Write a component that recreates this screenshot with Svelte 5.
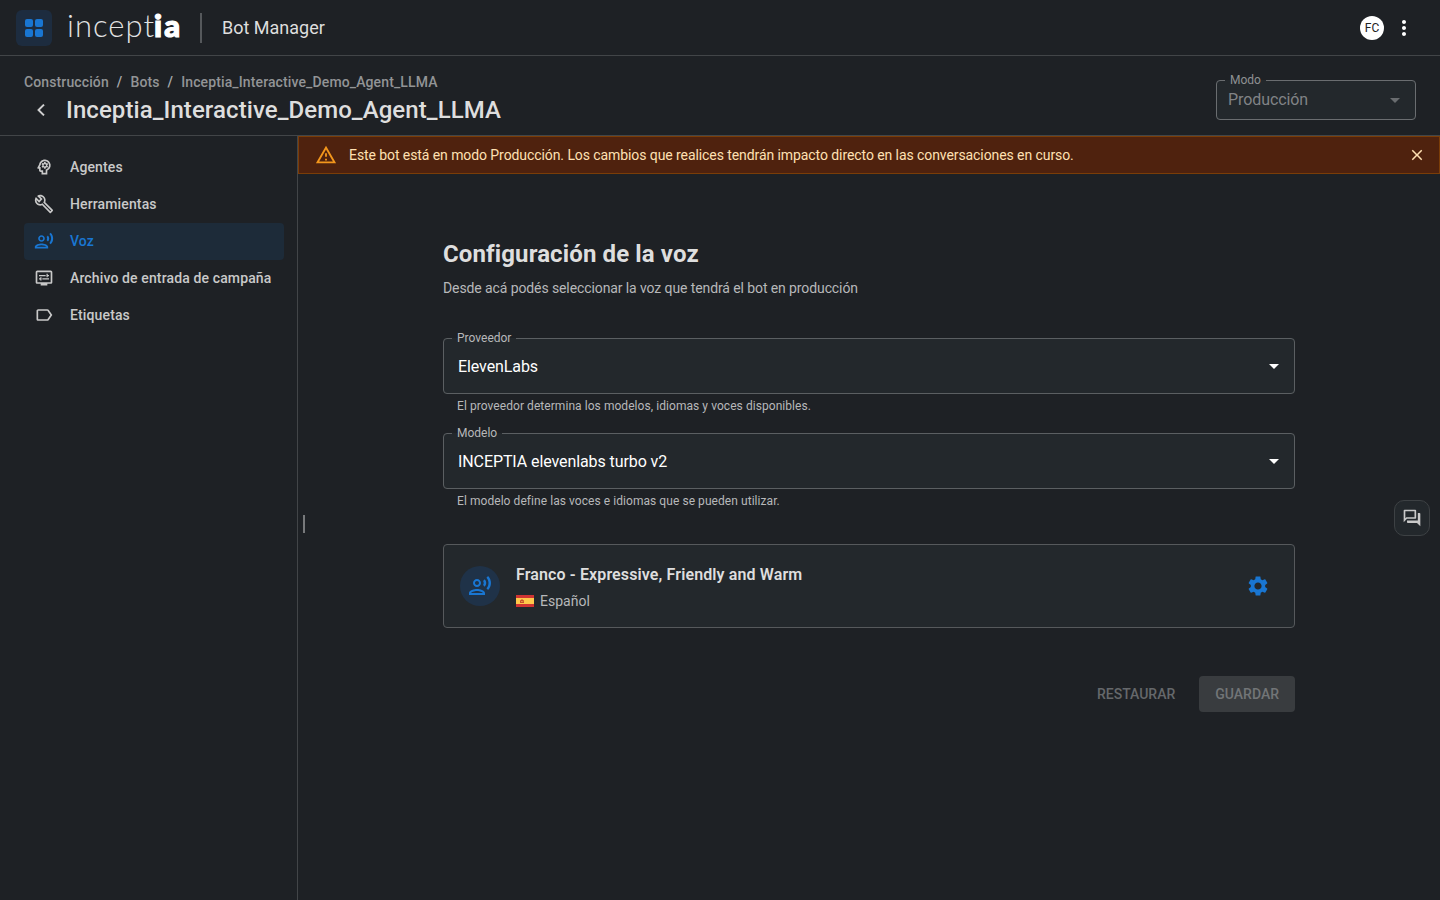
<script>
    let active = 'Voz';
    let showAlert = true;

    const voiceIcon =
        'M9 13c2.21 0 4-1.79 4-4s-1.79-4-4-4-4 1.79-4 4 1.79 4 4 4zm0-6c1.1 0 2 .9 2 2s-.9 2-2 2-2-.9-2-2 .9-2 2-2zm0 8c-2.67 0-8 1.34-8 4v2h16v-2c0-2.66-5.33-4-8-4zm-6 4c.22-.72 3.31-2 6-2 2.7 0 5.8 1.29 6 2H3zM15.08 7.05c.84 1.18.84 2.71 0 3.89l1.68 1.69c2.02-2.02 2.02-5.07 0-7.27l-1.68 1.69zM20.07 2l-1.63 1.63c2.77 3.02 2.77 7.56 0 10.74L20.07 16c3.9-3.89 3.91-9.95 0-14z';

    const crumbs = ['Construcción', 'Bots', 'Inceptia_Interactive_Demo_Agent_LLMA'];

    const menu = [
        {
            label: 'Agentes',
            icon: 'M15.82 7.22l-1 .4c-.21-.16-.43-.29-.67-.39L14 6.17c-.02-.1-.1-.17-.2-.17h-1.6c-.1 0-.18.07-.19.17l-.15 1.06c-.24.1-.47.23-.67.39l-1-.4c-.09-.03-.2 0-.24.09l-.8 1.38c-.05.09-.03.2.05.26l.85.66c-.03.12-.05.26-.05.39s.01.26.03.39l-.84.66c-.08.06-.1.17-.05.25l.8 1.39c.05.09.15.12.25.09l.99-.4c.21.16.43.29.68.39l.14 1.06c.02.1.1.17.2.17h1.6c.1 0 .18-.07.2-.17l.15-1.06c.24-.1.47-.23.67-.39l.99.4c.09.04.2 0 .24-.09l.8-1.39c.05-.09.03-.19-.05-.25l-.83-.66c.01-.13.02-.26.02-.39 0-.14-.01-.27-.04-.39l.85-.66c.08-.06.1-.17.05-.26l-.8-1.38c-.05-.09-.16-.12-.24-.09zM13 11.43c-.79 0-1.43-.64-1.43-1.43s.64-1.43 1.43-1.43 1.43.64 1.43 1.43-.64 1.43-1.43 1.43zM19.94 9.06c-.43-3.27-3.23-5.86-6.53-6.05C13.27 3 13.14 3 13 3 9.47 3 6.57 5.61 6.08 9l-1.93 3.48c-.41.66.07 1.52.85 1.52h1v2c0 1.1.9 2 2 2h1v3h7v-4.68c2.62-1.25 4.35-4.08 3.94-7.26zm-5.05 5.57l-.89.42V19h-3v-3H8v-4H6.7l1.33-2.33C8.21 7.06 10.35 5 13 5c2.76 0 5 2.24 5 5 0 2.09-1.29 3.88-3.11 4.63z'
        },
        {
            label: 'Herramientas',
            icon: 'M22.61 18.99l-9.08-9.08c.93-2.34.45-5.1-1.44-7C9.79.61 6.21.4 3.66 2.26L7.5 6.11 6.08 7.52 2.25 3.69C.39 6.23.6 9.82 2.9 12.11c1.86 1.86 4.57 2.35 6.89 1.48l9.11 9.11c.39.39 1.02.39 1.41 0l2.3-2.3c.4-.38.4-1.01 0-1.41zm-3 1.6l-9.46-9.46c-.61.45-1.29.72-2 .82-1.36.2-2.79-.21-3.83-1.25C3.37 9.76 2.93 8.5 3 7.26l3.09 3.09 4.24-4.24-3.09-3.09c1.24-.07 2.49.37 3.44 1.31 1.08 1.08 1.49 2.57 1.24 3.96-.12.71-.42 1.37-.88 1.96l9.45 9.45-.88.89z'
        },
        { label: 'Voz', icon: voiceIcon },
        {
            label: 'Archivo de entrada de campaña',
            icon: 'M20 3H4c-1.11 0-2 .89-2 2v12c0 1.1.89 2 2 2h4v2h8v-2h4c1.1 0 2-.9 2-2V5c0-1.11-.9-2-2-2zm0 14H4V5h16v12zM6 8.25h8v1.5H6zM16.5 9.75H18v-1.5h-1.5V7H15v4h1.5zM10 12.25h8v1.5h-8zM7.5 15H9v-4H7.5v1.25H6v1.5h1.5z'
        },
        {
            label: 'Etiquetas',
            icon: 'M17.63 5.84C17.27 5.33 16.67 5 16 5L5 5.01C3.9 5.01 3 5.9 3 7v10c0 1.1.9 1.99 2 1.99L16 19c.67 0 1.27-.33 1.63-.84L22 12l-4.37-6.16zM16 17H5V7h11l3.55 5L16 17z'
        }
    ];

    const fields = [
        {
            label: 'Proveedor',
            value: 'ElevenLabs',
            help: 'El proveedor determina los modelos, idiomas y voces disponibles.'
        },
        {
            label: 'Modelo',
            value: 'INCEPTIA elevenlabs turbo v2',
            help: 'El modelo define las voces e idiomas que se pueden utilizar.'
        }
    ];
</script>

<div class="page">
    <header class="topbar">
        <button class="apps" aria-label="Aplicaciones">
            <span></span><span></span><span></span><span></span>
        </button>
        <svg class="logo" width="116" height="40" viewBox="0 0 116 40">
            <text class="thin" x="-1" y="29" textLength="87">incept</text>
            <text class="heavy" x="86" y="29" textLength="26">ia</text>
        </svg>
        <div class="divider"></div>
        <span class="product">Bot Manager</span>
        <div class="avatar">FC</div>
        <svg class="more" width="24" height="24" viewBox="0 0 24 24">
            <path d="M12 8c1.1 0 2-.9 2-2s-.9-2-2-2-2 .9-2 2 .9 2 2 2zm0 2c-1.1 0-2 .9-2 2s.9 2 2 2 2-.9 2-2-.9-2-2-2zm0 6c-1.1 0-2 .9-2 2s.9 2 2 2 2-.9 2-2-.9-2-2-2z" />
        </svg>
    </header>

    <div class="subheader">
        <div>
            <nav class="crumbs">
                {#each crumbs as crumb, i}
                    {#if i > 0}<span class="slash">/</span>{/if}
                    <span>{crumb}</span>
                {/each}
            </nav>
            <div class="title">
                <svg width="14" height="14" viewBox="0 0 24 24">
                    <path d="M17.77 3.77 16 2 6 12l10 10 1.77-1.77L9.54 12z" />
                </svg>
                <h1>Inceptia_Interactive_Demo_Agent_LLMA</h1>
            </div>
        </div>
        <fieldset class="field mode">
            <legend>Modo</legend>
            <div class="value">
                <span>Producción</span>
                <svg width="24" height="24" viewBox="0 0 24 24"><path d="M7 10l5 5 5-5z" /></svg>
            </div>
        </fieldset>
    </div>

    <div class="body">
        <aside>
            {#each menu as item}
                <button class="item" class:active={active === item.label} on:click={() => (active = item.label)}>
                    <svg width="20" height="20" viewBox="0 0 24 24"><path d={item.icon} /></svg>
                    <span>{item.label}</span>
                </button>
            {/each}
        </aside>

        <main>
            {#if showAlert}
                <div class="alert">
                    <svg width="22" height="22" viewBox="0 0 24 24">
                        <path d="M12 5.99L19.53 19H4.47L12 5.99M12 2L1 21h22L12 2zm1 14h-2v2h2v-2zm0-6h-2v4h2v-4z" />
                    </svg>
                    <p>Este bot está en modo Producción. Los cambios que realices tendrán impacto directo en las conversaciones en curso.</p>
                    <button class="close" aria-label="Cerrar" on:click={() => (showAlert = false)}>
                        <svg width="18" height="18" viewBox="0 0 24 24">
                            <path d="M19 6.41L17.59 5 12 10.59 6.41 5 5 6.41 10.59 12 5 17.59 6.41 19 12 13.41 17.59 19 19 17.59 13.41 12z" />
                        </svg>
                    </button>
                </div>
            {/if}

            <div class="handle"></div>

            <section>
                <h2>Configuración de la voz</h2>
                <p class="intro">Desde acá podés seleccionar la voz que tendrá el bot en producción</p>

                {#each fields as field}
                    <fieldset class="field">
                        <legend>{field.label}</legend>
                        <div class="value">
                            <span>{field.value}</span>
                            <svg width="24" height="24" viewBox="0 0 24 24"><path d="M7 10l5 5 5-5z" /></svg>
                        </div>
                    </fieldset>
                    <p class="help">{field.help}</p>
                {/each}

                <div class="voice">
                    <div class="badge">
                        <svg width="24" height="24" viewBox="0 0 24 24"><path d={voiceIcon} /></svg>
                    </div>
                    <div class="info">
                        <strong>Franco - Expressive, Friendly and Warm</strong>
                        <div class="lang">
                            <svg width="18" height="12" viewBox="0 0 18 12">
                                <rect width="18" height="12" fill="#ffc84a" />
                                <rect width="18" height="3" fill="#d03433" />
                                <rect y="9" width="18" height="3" fill="#d03433" />
                                <path d="M4 5.2h1V4.4h2v.8h1V8H4z" fill="#c8502b" />
                                <path d="M5 6h.8v1H5zM6.4 6h.8v1h-.8z" fill="#f0b04a" />
                            </svg>
                            <span>Español</span>
                        </div>
                    </div>
                    <button class="gear" aria-label="Configurar">
                        <svg width="24" height="24" viewBox="0 0 24 24">
                            <path d="M19.14 12.94c.04-.3.06-.61.06-.94 0-.32-.02-.64-.07-.94l2.03-1.58c.18-.14.23-.41.12-.61l-1.92-3.32c-.12-.22-.37-.29-.59-.22l-2.39.96c-.5-.38-1.03-.7-1.62-.94l-.36-2.54c-.04-.24-.24-.41-.48-.41h-3.84c-.24 0-.43.17-.47.41l-.36 2.54c-.59.24-1.13.57-1.62.94l-2.39-.96c-.22-.08-.47 0-.59.22L2.74 8.87c-.12.21-.08.47.12.61l2.03 1.58c-.05.3-.09.63-.09.94s.02.64.07.94l-2.03 1.58c-.18.14-.23.41-.12.61l1.92 3.32c.12.22.37.29.59.22l2.39-.96c.5.38 1.03.7 1.62.94l.36 2.54c.05.24.24.41.48.41h3.84c.24 0 .44-.17.47-.41l.36-2.54c.59-.24 1.13-.56 1.62-.94l2.39.96c.22.08.47 0 .59-.22l1.92-3.32c.12-.22.07-.47-.12-.61l-2.01-1.58zM12 15.6c-1.98 0-3.6-1.62-3.6-3.6s1.62-3.6 3.6-3.6 3.6 1.62 3.6 3.6-1.62 3.6-3.6 3.6z" />
                        </svg>
                    </button>
                </div>

                <div class="actions">
                    <button disabled>RESTAURAR</button>
                    <button disabled class="save">GUARDAR</button>
                </div>
            </section>

            <button class="chat" aria-label="Chat">
                <svg width="20" height="20" viewBox="0 0 24 24">
                    <path d="M15 4v7H5.17L4 12.17V4h11m1-2H3c-.55 0-1 .45-1 1v14l4-4h10c.55 0 1-.45 1-1V3c0-.55-.45-1-1-1zm5 4h-2v9H6v2c0 .55.45 1 1 1h11l4 4V7c0-.55-.45-1-1-1z" />
                </svg>
            </button>
        </main>
    </div>
</div>

<style>
    :global(body) {
        background: #1e2125;
    }

    .page {
        height: 100vh;
        display: flex;
        flex-direction: column;
        background: #1e2125;
        color: #dedede;
        font-family: Roboto, sans-serif;
        font-size: 14px;
        overflow: hidden;
    }

    .page * {
        box-sizing: border-box;
    }

    svg {
        display: block;
        flex: none;
        fill: currentColor;
    }

    button {
        padding: 0;
        border: 0;
        background: none;
        color: inherit;
        font: inherit;
    }

    h1,
    h2,
    p {
        margin: 0;
    }

    .topbar {
        height: 56px;
        flex: none;
        display: flex;
        align-items: center;
        padding: 0 24px 0 16px;
        border-bottom: 1px solid #424548;
    }

    .apps {
        width: 36px;
        height: 36px;
        padding: 9px;
        display: grid;
        grid-template-columns: 8px 8px;
        gap: 2px;
        border-radius: 6px;
        background: #1d2c3f;
    }

    .apps span {
        height: 8px;
        border-radius: 2px;
        background: #1976d2;
    }

    .logo {
        margin-left: 16px;
        color: #fff;
        font-family: Lato, sans-serif;
        font-size: 31px;
        overflow: visible;
    }

    .thin {
        font-weight: 300;
        fill-opacity: 0.88;
    }

    .heavy {
        font-weight: 900;
        stroke: currentColor;
        stroke-width: 1.2px;
    }

    .divider {
        width: 2px;
        height: 30px;
        margin: 0 20px 0 16px;
        background: #55585b;
    }

    .product {
        flex: 1;
        font-size: 18px;
    }

    .avatar {
        width: 24px;
        height: 24px;
        border-radius: 50%;
        background: #fff;
        color: #1e2125;
        font-size: 12px;
        line-height: 24px;
        text-align: center;
    }

    .more {
        margin: 0 0 0 8px;
        color: #fff;
    }

    .subheader {
        height: 80px;
        flex: none;
        display: flex;
        justify-content: space-between;
        padding: 16px 24px 0;
        border-bottom: 1px solid #424548;
    }

    .crumbs {
        display: flex;
        gap: 8px;
        line-height: 20px;
        font-weight: 500;
        letter-spacing: 0.12px;
        color: #929496;
    }

    .slash {
        color: #a9abad;
    }

    .title {
        display: flex;
        align-items: center;
        gap: 18px;
        padding-left: 10px;
        line-height: 36px;
    }

    .title svg {
        stroke: currentColor;
        stroke-width: 0.8px;
    }

    h1 {
        font-size: 24px;
        font-weight: 500;
        letter-spacing: 0.08px;
    }

    .field {
        min-width: 0;
        height: 62px;
        margin: -6px 0 0;
        padding: 0;
        border: 1px solid #5b5f62;
        border-radius: 4px;
        background: #23282c;
    }

    legend {
        height: 13px;
        margin-left: 8px;
        padding: 0 5px;
        font-size: 12px;
        line-height: 13px;
        color: #b7b8ba;
    }

    .value {
        height: 42px;
        display: flex;
        align-items: center;
        justify-content: space-between;
        padding: 0 8px 0 14px;
        font-size: 16px;
        letter-spacing: -0.09px;
        color: #fff;
    }

    .mode {
        width: 200px;
        height: 46px;
        margin-top: 2px;
        border-color: #6a6d70;
    }

    .mode legend {
        color: #8f9193;
    }

    .mode .value {
        height: 26px;
        padding: 0 8px 1px 11px;
        color: #818386;
    }

    .mode svg {
        color: #696c6f;
    }

    .body {
        flex: 1;
        display: flex;
        min-height: 0;
    }

    aside {
        width: 298px;
        flex: none;
        padding: 13px 13px 0 24px;
        border-right: 1px solid #424548;
    }

    .item {
        width: 260px;
        height: 37px;
        display: flex;
        align-items: center;
        gap: 16px;
        padding: 0 0 1px 10px;
        border-radius: 4px;
        font-weight: 500;
        line-height: 20px;
        letter-spacing: 0.13px;
        color: #c9c9c9;
    }

    .item.active {
        background: #1d2b39;
        color: #1976d2;
    }

    main {
        flex: 1;
        position: relative;
    }

    .alert {
        height: 38px;
        display: flex;
        align-items: center;
        padding: 0 13px 0 16px;
        border: 1px solid #7a3d08;
        background: #4f220e;
        color: #ffe0b2;
    }

    .alert > svg {
        color: #f3971c;
    }

    .alert p {
        flex: 1;
        margin-left: 12px;
        letter-spacing: -0.08px;
    }

    .handle {
        position: absolute;
        left: 5px;
        top: 379px;
        width: 2px;
        height: 18px;
        background: #77797b;
    }

    section {
        width: 852px;
        margin: 0 auto;
        padding-top: 64px;
    }

    h2 {
        font-size: 24px;
        font-weight: 700;
        line-height: 32px;
        letter-spacing: 0.12px;
    }

    .intro {
        margin: 8px 0 40px;
        line-height: 20px;
        letter-spacing: -0.1px;
        color: #b7b8ba;
    }

    .help {
        margin: 4px 14px 19px;
        font-size: 12px;
        line-height: 16px;
        letter-spacing: 0.06px;
        color: #b7b8ba;
    }

    .voice {
        height: 84px;
        display: flex;
        align-items: center;
        margin-top: 35px;
        padding: 0 24px 0 16px;
        border: 1px solid #56595c;
        border-radius: 4px;
        background: #23282c;
    }

    .badge {
        width: 40px;
        height: 40px;
        display: grid;
        place-items: center;
        border-radius: 50%;
        background: #1f3248;
        color: #1976d2;
    }

    .info {
        flex: 1;
        margin-left: 16px;
        padding-top: 3px;
    }

    strong {
        display: block;
        font-size: 16px;
        font-weight: 600;
        line-height: 24px;
        letter-spacing: 0.12px;
    }

    .lang {
        display: flex;
        align-items: center;
        gap: 6px;
        margin-top: 3px;
        line-height: 22px;
        color: #b7b8ba;
    }

    .gear {
        color: #1976d2;
    }

    .actions {
        display: flex;
        justify-content: flex-end;
        gap: 16px;
        margin-top: 48px;
    }

    .actions button {
        height: 36px;
        padding: 0 8px;
        border-radius: 4px;
        font-weight: 500;
        color: #65686b;
    }

    .actions .save {
        padding: 0 16px;
        background: #393c3f;
        color: #727577;
    }

    .chat {
        position: absolute;
        right: 10px;
        top: 364px;
        width: 36px;
        height: 36px;
        display: grid;
        place-items: center;
        border: 1px solid #3d4144;
        border-radius: 10px;
        background: #23282c;
        color: #c9c9c9;
    }
</style>
